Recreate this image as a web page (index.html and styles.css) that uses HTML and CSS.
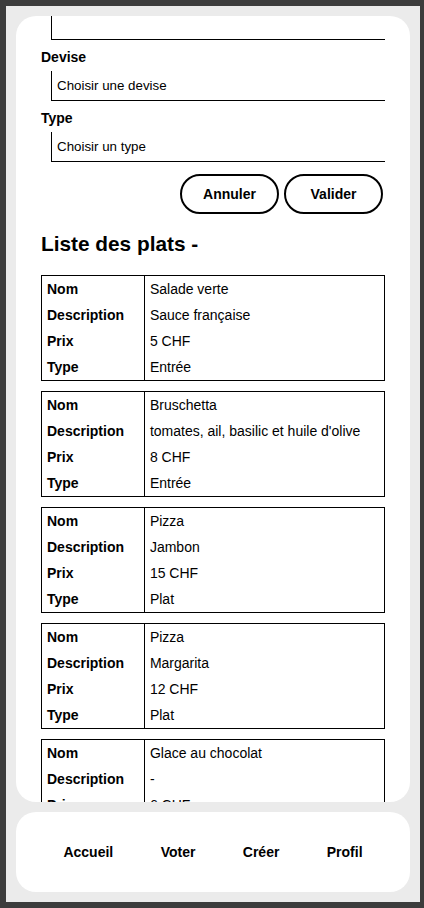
FILE: index.html
```html
<!DOCTYPE html>
<html lang="fr">
<head>
    <meta charset="UTF-8">
    <meta name="viewport" content="width=device-width, initial-scale=1.0">
    <title>Créer un plat</title>
    <link rel="stylesheet" href="styles.css">
</head>
<body>
    <div class="frame">
        <main class="panel" id="panel">
            <form class="dish-form">
                <div class="field field-top">
                    <input type="number" id="prix" aria-label="Prix">
                </div>
                <div class="field">
                    <label for="devise">Devise</label>
                    <select id="devise">
                        <option>Choisir une devise</option>
                        <option>CHF</option>
                        <option>EUR</option>
                    </select>
                </div>
                <div class="field">
                    <label for="type">Type</label>
                    <select id="type">
                        <option>Choisir un type</option>
                        <option>Entrée</option>
                        <option>Plat</option>
                        <option>Dessert</option>
                    </select>
                </div>
                <div class="actions">
                    <button type="button" class="btn">Annuler</button>
                    <button type="submit" class="btn">Valider</button>
                </div>
            </form>

            <h2 class="list-title">Liste des plats -</h2>

            <table class="dish">
                <tr><th>Nom</th><td>Salade verte</td></tr>
                <tr><th>Description</th><td>Sauce française</td></tr>
                <tr><th>Prix</th><td>5 CHF</td></tr>
                <tr><th>Type</th><td>Entrée</td></tr>
            </table>
            <table class="dish">
                <tr><th>Nom</th><td>Bruschetta</td></tr>
                <tr><th>Description</th><td>tomates, ail, basilic et huile d'olive</td></tr>
                <tr><th>Prix</th><td>8 CHF</td></tr>
                <tr><th>Type</th><td>Entrée</td></tr>
            </table>
            <table class="dish">
                <tr><th>Nom</th><td>Pizza</td></tr>
                <tr><th>Description</th><td>Jambon</td></tr>
                <tr><th>Prix</th><td>15 CHF</td></tr>
                <tr><th>Type</th><td>Plat</td></tr>
            </table>
            <table class="dish">
                <tr><th>Nom</th><td>Pizza</td></tr>
                <tr><th>Description</th><td>Margarita</td></tr>
                <tr><th>Prix</th><td>12 CHF</td></tr>
                <tr><th>Type</th><td>Plat</td></tr>
            </table>
            <table class="dish">
                <tr><th>Nom</th><td>Glace au chocolat</td></tr>
                <tr><th>Description</th><td>-</td></tr>
                <tr><th>Prix</th><td>6 CHF</td></tr>
                <tr><th>Type</th><td>Dessert</td></tr>
            </table>
        </main>

        <nav class="tabbar">
            <a href="#">Accueil</a>
            <a href="#">Voter</a>
            <a href="#">Créer</a>
            <a href="#">Profil</a>
        </nav>
    </div>

    <script>
        // the form is scrolled a little, the top field is half hidden
        document.getElementById('panel').scrollTop = 6;
    </script>
</body>
</html>
```

FILE: styles.css
```css
body {
    margin: 0;
    font-family: 'Liberation Sans', Arial, sans-serif;
    color: #000;
}

.frame {
    box-sizing: border-box;
    height: 908px;
    border: 6px solid #3c3c3c;
    border-right-width: 4px;
    background: #ebebeb;
    padding: 10px;
    display: flex;
    flex-direction: column;
    gap: 10px;
}

/* Scrolled content card */
.panel {
    position: relative;
    flex: 1;
    min-height: 0;
    overflow: hidden;
    background: #fff;
    border-radius: 20px;
    padding: 0 25px 20px;
}

.field {
    padding-top: 9px;
}

.field-top {
    padding-top: 0;
}

.field label {
    display: block;
    font-size: 14px;
    font-weight: bold;
    line-height: 16px;
    margin-bottom: 6px;
}

.field input,
.field select {
    display: block;
    box-sizing: border-box;
    width: calc(100% - 10px);
    height: 30px;
    margin: 0 0 0 10px;
    padding: 0 5px;
    border: none;
    border-left: 1px solid #000;
    border-bottom: 1px solid #000;
    border-radius: 0;
    background: #fff;
    font-family: inherit;
    font-size: 13.333px;
    color: #000;
    appearance: none;
    -webkit-appearance: none;
    outline: none;
}

.actions {
    display: flex;
    justify-content: flex-end;
    gap: 5px;
    margin-top: 12px;
    padding-right: 2px;
}

.btn {
    box-sizing: border-box;
    width: 99px;
    height: 40px;
    border: 2px solid #000;
    border-radius: 20px;
    background: #fff;
    font-family: inherit;
    font-size: 14px;
    font-weight: bold;
    color: #000;
    cursor: pointer;
}

.list-title {
    font-size: 20.8px;
    line-height: 24px;
    margin: 18px 0 19px;
}

.dish {
    width: 100%;
    border-collapse: collapse;
    border: 1px solid #000;
    margin-bottom: 10px;
    font-size: 14px;
    line-height: 16px;
}

.dish th,
.dish td {
    padding: 5px;
    text-align: left;
    vertical-align: top;
}

.dish th {
    width: 30%;
    border-right: 1px solid #000;
}

/* Bottom navigation */
.tabbar {
    flex: 0 0 80px;
    background: #fff;
    border-radius: 20px;
    display: flex;
    justify-content: space-evenly;
    align-items: center;
}

.tabbar a {
    color: #000;
    text-decoration: none;
    font-size: 14px;
    font-weight: bold;
}
```
